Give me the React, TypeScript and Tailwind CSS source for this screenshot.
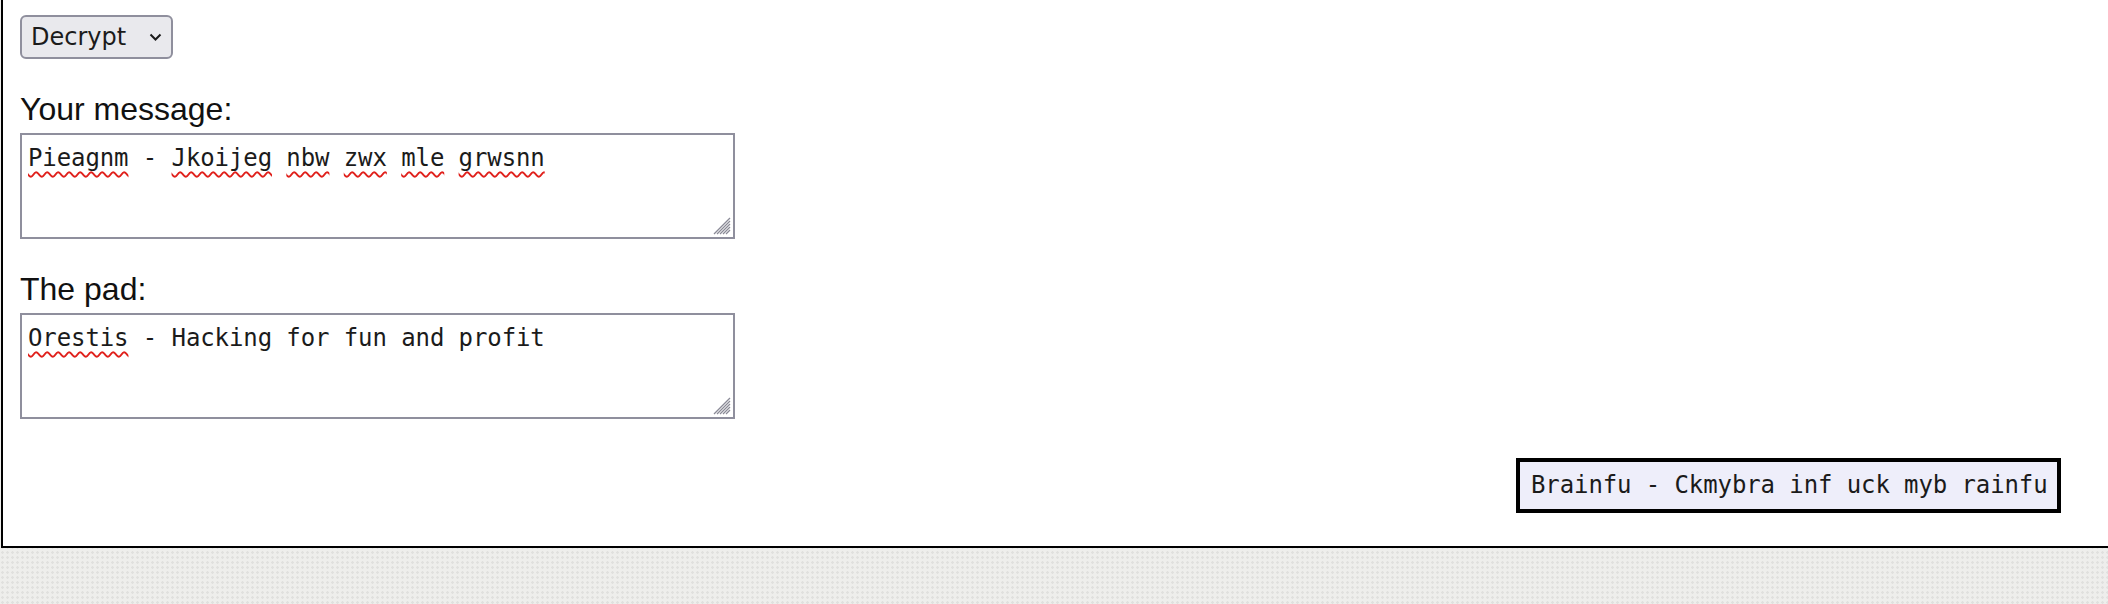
import React, { useState } from 'react';

const mono = "font-['DejaVu_Sans_Mono',monospace]";

interface FieldProps {
  label: string;
  words: { text: string; misspelt: boolean }[];
}

const ResizeGrip: React.FC = () => (
  <svg
    className="absolute right-[2px] bottom-[2px] w-[20px] h-[20px]"
    viewBox="0 0 20 20"
    fill="none"
    stroke="#8a8a96"
    strokeWidth="1.3"
  >
    <line x1="3" y1="19" x2="19" y2="3" />
    <line x1="6" y1="19" x2="19" y2="6" />
    <line x1="9" y1="19" x2="19" y2="9" />
    <line x1="12" y1="19" x2="19" y2="12" />
    <line x1="15" y1="19" x2="19" y2="15" />
  </svg>
);

const PadField: React.FC<FieldProps> = ({ label, words }) => (
  <div className="flex flex-col">
    <div className="text-[32px] leading-[36px] text-[#111] font-['Liberation_Sans',Arial,sans-serif]">
      {label}
    </div>
    <div
      className={`relative mt-[6px] w-[715px] h-[106px] border-2 border-[#8f8f9d] bg-white pl-[6px] pt-[9px] text-[24px] leading-[28px] tracking-[-0.1px] text-[#1b1b1b] whitespace-pre ${mono}`}
    >
      {words.map((w, i) => (
        <React.Fragment key={i}>
          {i > 0 && ' '}
          <span
            className={
              w.misspelt
                ? 'underline decoration-wavy decoration-[#e0201b] decoration-[2px] underline-offset-[5px]'
                : ''
            }
          >
            {w.text}
          </span>
        </React.Fragment>
      ))}
      <ResizeGrip />
    </div>
  </div>
);

const split = (s: string, ok: string[]) =>
  s.split(' ').map((text) => ({ text, misspelt: !ok.includes(text) }));

const App: React.FC = () => {
  const [mode, setMode] = useState('decrypt');

  const message = split('Pieagnm - Jkoijeg nbw zwx mle grwsnn', ['-']);
  const pad = split('Orestis - Hacking for fun and profit', [
    '-', 'Hacking', 'for', 'fun', 'and', 'profit',
  ]);

  return (
    <div className="w-[2108px] h-[604px] overflow-hidden bg-[#eeeeec] bg-[radial-gradient(#e0e0de_1px,transparent_1.5px)] bg-[length:5px_5px]">
      <div className="ml-[1px] h-[548px] bg-white border-l-2 border-b-2 border-black pl-[17px] pt-[15px] flex flex-col">
        <div className="relative w-[153px] h-[44px]">
          <select
            value={mode}
            onChange={(e) => setMode(e.target.value)}
            className="appearance-none w-full h-full rounded-[6px] border-2 border-[#8f8f9d] bg-[#e9e9ed] pl-[9px] text-[24px] text-[#1b1b1b] font-['DejaVu_Sans',sans-serif] outline-none"
          >
            <option value="encrypt">Encrypt</option>
            <option value="decrypt">Decrypt</option>
          </select>
          <svg
            className="absolute right-[11px] top-[18px] w-[13px] h-[8px] pointer-events-none"
            viewBox="0 0 13 8"
            fill="none"
            stroke="#1b1b1b"
            strokeWidth="2"
          >
            <polyline points="1.5,1.5 6.5,6.5 11.5,1.5" />
          </svg>
        </div>

        <div className="mt-[32px]">
          <PadField label="Your message:" words={message} />
        </div>
        <div className="mt-[32px]">
          <PadField label="The pad:" words={pad} />
        </div>

        <div className="mt-[39px] flex justify-end pr-[47px]">
          <div
            className={`w-[545px] border-4 border-black bg-[#eeeefa] pl-[11px] py-[10px] text-[24px] leading-[27px] tracking-[-0.1px] text-[#1b1b1b] whitespace-pre ${mono}`}
          >
            Brainfu - Ckmybra inf uck myb rainfu
          </div>
        </div>
      </div>
    </div>
  );
};

export default App;
